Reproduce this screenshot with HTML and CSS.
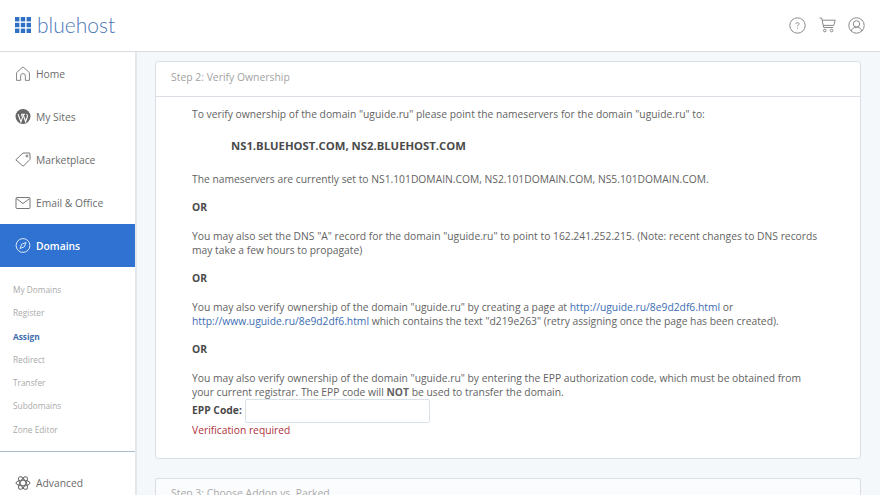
FILE: index.html
```html
<!DOCTYPE html>
<html lang="en">
<head>
<meta charset="utf-8">
<title>Bluehost - Assign Domain</title>
<link rel="stylesheet" href="styles.css">
</head>
<body>
<div class="app">
  <header class="topbar">
    <div class="brand">
      <svg class="brand-grid" width="16" height="16" viewBox="0 0 16 16"><g fill="#2f6fc4"><rect x="0" y="0" width="4.4" height="4.4"/><rect x="5.8" y="0" width="4.4" height="4.4"/><rect x="11.6" y="0" width="4.4" height="4.4"/><rect x="0" y="5.8" width="4.4" height="4.4"/><rect x="5.8" y="5.8" width="4.4" height="4.4"/><rect x="11.6" y="5.8" width="4.4" height="4.4"/><rect x="0" y="11.6" width="4.4" height="4.4"/><rect x="5.8" y="11.6" width="4.4" height="4.4"/><rect x="11.6" y="11.6" width="4.4" height="4.4"/></g></svg>
      <span class="brand-name">bluehost</span>
    </div>
    <div class="top-icons">
      <svg width="17" height="17" viewBox="0 0 17 17" fill="none" stroke="#888"><circle cx="8.5" cy="8.5" r="7.7"/><path d="M7 7c0-.9.6-1.400 1.500-1.400S10 6.100 10 6.900c0 1.100-1.500 1.100-1.500 2.300M8.500 10.600v1"/></svg>
      <svg width="17" height="17" viewBox="0 0 17 17" fill="none" stroke="#888"><path d="M.5 1h2.200l2 9.500h9.600M3.200 3.200h13l-1.400 5.200H4.300"/><circle cx="5.800" cy="13.500" r="1.300"/><circle cx="12.600" cy="13.500" r="1.300"/></svg>
      <svg width="17" height="17" viewBox="0 0 17 17" fill="none" stroke="#888"><circle cx="8.500" cy="8.500" r="7.700"/><circle cx="8.500" cy="6.900" r="3.200"/><path d="M3.200 14c.7-2.600 2.600-3.800 5.300-3.800s4.600 1.200 5.300 3.800"/></svg>
    </div>
  </header>
  <div class="main">
    <nav class="sidebar">
      <a class="nav-item">
        <svg width="16" height="15" viewBox="0 0 16 17" fill="none" stroke="#777"><path d="M.7 7.500 8 1l7.300 6.500v8.800h-4.600v-5a2.700 2.700 0 0 0-5.400 0v5H.7z"/></svg>
        <span>Home</span>
      </a>
      <a class="nav-item">
        <svg width="15" height="15" viewBox="0 0 15 15"><circle cx="7.500" cy="7.500" r="7.500" fill="#666"/><path d="M2.600 5.200 5.400 13 7 8.600 5.900 5.200M6 5.200h3.600M7.500 5.200l2.600 7.600 1.800-5c.4-1.200-.4-2-.8-2.700" fill="none" stroke="#fff" stroke-width="1.100"/></svg>
        <span>My Sites</span>
      </a>
      <a class="nav-item">
        <svg width="16" height="15" viewBox="0 0 16 15" fill="none" stroke="#777"><path d="M.8 7.800 8 1h6.800l.4 6.200-7 7z"/><circle cx="12" cy="4" r="1"/></svg>
        <span>Marketplace</span>
      </a>
      <a class="nav-item">
        <svg width="15" height="12" viewBox="0 0 15 12" fill="none" stroke="#777"><rect x=".5" y=".5" width="14" height="11" rx="1"/><path d="m.8 1.500 6.700 5 6.700-5"/></svg>
        <span>Email &amp; Office</span>
      </a>
      <a class="nav-item active">
        <svg width="15" height="15" viewBox="0 0 15 15" fill="none" stroke="#dce8f8"><circle cx="7.500" cy="7.500" r="6.900"/><path d="M10.500 4.500 8.800 8.800 4.500 10.500l1.700-4.300z"/></svg>
        <span>Domains</span>
      </a>
      <ul class="subnav">
        <li>My Domains</li>
        <li>Register</li>
        <li class="current">Assign</li>
        <li>Redirect</li>
        <li>Transfer</li>
        <li>Subdomains</li>
        <li>Zone Editor</li>
      </ul>
      <a class="nav-item advanced">
        <svg width="15" height="16" viewBox="0 0 15 16" fill="none" stroke="#666"><ellipse cx="7.500" cy="8" rx="7" ry="2.800"/><ellipse cx="7.500" cy="8" rx="7" ry="2.800" transform="rotate(60 7.500 8)"/><ellipse cx="7.500" cy="8" rx="7" ry="2.800" transform="rotate(120 7.500 8)"/></svg>
        <span>Advanced</span>
      </a>
    </nav>
    <main class="content">
      <section class="card">
        <h2 class="card-head">Step 2: Verify Ownership</h2>
        <div class="card-body">
          <p>To verify ownership of the domain "uguide.ru" please point the nameservers for the domain "uguide.ru" to:</p>
          <p class="ns">NS1.BLUEHOST.COM, NS2.BLUEHOST.COM</p>
          <p>The nameservers are currently set to NS1.101DOMAIN.COM, NS2.101DOMAIN.COM, NS5.101DOMAIN.COM.</p>
          <p class="or">OR</p>
          <p>You may also set the DNS "A" record for the domain "uguide.ru" to point to 162.241.252.215. (Note: recent changes to DNS records may take a few hours to propagate)</p>
          <p class="or">OR</p>
          <p>You may also verify ownership of the domain "uguide.ru" by creating a page at <a class="link">http://uguide.ru/8e9d2df6.html</a> or <a class="link">http://www.uguide.ru/8e9d2df6.html</a> which contains the text "d219e263" (retry assigning once the page has been created).</p>
          <p class="or">OR</p>
          <p class="tight">You may also verify ownership of the domain "uguide.ru" by entering the EPP authorization code, which must be obtained from your current registrar. The EPP code will <b>NOT</b> be used to transfer the domain.</p>
          <div class="epp"><label for="epp">EPP Code:</label><input id="epp" type="text"></div>
          <p class="error">Verification required</p>
        </div>
      </section>
      <section class="card next">
        <h2 class="card-head">Step 3: Choose Addon vs. Parked</h2>
      </section>
    </main>
  </div>
</div>
</body>
</html>
```
FILE: styles.css
```css
* { box-sizing: border-box; }
html, body { margin: 0; height: 495px; overflow: hidden; }
body { font-family: "Open Sans", sans-serif; font-size: 10.3px; color: #636363; background: #f5f8fb; }
.app { display: flex; flex-direction: column; height: 495px; }
.topbar { height: 52px; flex: none; background: #fff; border-bottom: 1px solid #d9dde1; display: flex; align-items: center; justify-content: space-between; padding: 0 15px 1px 15px; }
.brand { display: flex; align-items: center; gap: 6px; margin-top: -1px; }
.brand-name { font-family: Lato, sans-serif; font-weight: 300; font-size: 21px; line-height: 24px; color: #4a78b8; }
.top-icons { display: flex; gap: 13px; align-items: center; margin-top: 1px; }
.top-icons svg:last-child { margin-left: -1px; }
.main { display: flex; flex: 1; min-height: 0; }
.sidebar { width: 137px; flex: none; background: #fff; border-right: 2px solid #e3e7eb; display: flex; flex-direction: column; }
.nav-item { height: 43px; flex: none; display: flex; align-items: center; gap: 5px; padding-left: 15px; font-size: 10.3px; color: #6b6b6b; }
.nav-item svg { width: 16px; flex: none; }
.nav-item.active { background: #2f72d2; color: #fff; font-weight: 600; }
.subnav { list-style: none; margin: 0; padding: 11px 0 10px 13px; border-bottom: 1px solid #a9c0d2; height: 185px; flex: none; font-size: 8.3px; color: #aaa; }
.subnav li { height: 23.3px; line-height: 23.3px; }
.subnav .current { color: #3f6db0; font-weight: 700; }
.advanced { margin-top: 9px; }
.content { flex: 1; min-width: 0; padding: 9px 19px 0 18px; overflow: hidden; }
.card { background: #fff; border: 1px solid #d9dfe5; border-radius: 3px; }
.card-head { margin: 0; height: 35px; padding: 0 15px; font-size: 10.4px; line-height: 30px; font-weight: 400; color: #a3a3a3; border-bottom: 1px solid #d9dfe5; }
.card-body { padding: 10px 36px 0; height: 361px; line-height: 14px; }
.card-body p { margin: 0 0 14px; }
.card-body .ns { font-size: 11.3px; font-weight: 700; color: #4a4a4a; padding-left: 39px; margin: 18px 0 19px; }
.card-body .or { font-weight: 700; color: #4a4a4a; margin-bottom: 15px; }
.card-body .tight { margin-bottom: 0; }
.link { color: #3b6db3; }
.epp { display: flex; align-items: center; gap: 3px; }
.epp label { font-weight: 700; color: #4a4a4a; padding-bottom: 2px; }
input { width: 185px; height: 24px; border: 1px solid #d9e2e8; border-radius: 2px; background: #fff; padding: 0 4px; }
.card-body .error { color: #b0323c; margin: 0; line-height: 14px; }
.next { margin-top: 19px; height: 60px; background: #fbfcfd; }
.next .card-head { border: 0; color: #aaa; line-height: 29px; }
```
